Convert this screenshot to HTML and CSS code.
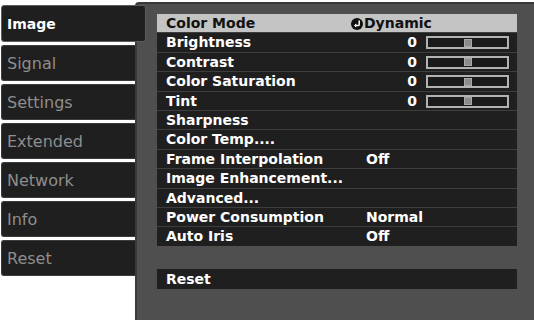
FILE: index.html
```html
<!DOCTYPE html>
<html lang="en">
<head>
    <meta charset="UTF-8">
    <title>Image</title>
    <link rel="stylesheet" href="styles.css">
</head>
<body>
    <div class="screen">
        <nav class="tabs">
            <div class="tab active">Image</div>
            <div class="tab">Signal</div>
            <div class="tab">Settings</div>
            <div class="tab">Extended</div>
            <div class="tab">Network</div>
            <div class="tab">Info</div>
            <div class="tab">Reset</div>
        </nav>

        <main class="panel">
            <div class="list">
                <div class="row selected">
                    <span class="label">Color Mode</span>
                    <span class="value">
                        <svg class="enter-icon" width="12" height="12" viewBox="0 0 12 12">
                            <circle cx="6" cy="6" r="6" fill="#111"/>
                            <path d="M8.2 2.6 V6.4 Q8.2 7.6 7 7.6 H4.4" fill="none" stroke="#fff" stroke-width="1.5"/>
                            <path d="M5.2 5.6 L3 7.6 L5.2 9.6 Z" fill="#fff"/>
                        </svg>Dynamic
                    </span>
                </div>
                <div class="row">
                    <span class="label">Brightness</span>
                    <span class="value"><span class="num">0</span><span class="slider"><span class="knob"></span></span></span>
                </div>
                <div class="row">
                    <span class="label">Contrast</span>
                    <span class="value"><span class="num">0</span><span class="slider"><span class="knob"></span></span></span>
                </div>
                <div class="row">
                    <span class="label">Color Saturation</span>
                    <span class="value"><span class="num">0</span><span class="slider"><span class="knob"></span></span></span>
                </div>
                <div class="row">
                    <span class="label">Tint</span>
                    <span class="value"><span class="num">0</span><span class="slider"><span class="knob"></span></span></span>
                </div>
                <div class="row"><span class="label">Sharpness</span></div>
                <div class="row"><span class="label">Color Temp....</span></div>
                <div class="row">
                    <span class="label">Frame Interpolation</span>
                    <span class="value">Off</span>
                </div>
                <div class="row"><span class="label">Image Enhancement...</span></div>
                <div class="row"><span class="label">Advanced...</span></div>
                <div class="row">
                    <span class="label">Power Consumption</span>
                    <span class="value">Normal</span>
                </div>
                <div class="row">
                    <span class="label">Auto Iris</span>
                    <span class="value">Off</span>
                </div>
            </div>

            <div class="row reset"><span class="label">Reset</span></div>
        </main>
    </div>
</body>
</html>
```

FILE: styles.css
```css
body {
    margin: 0;
    background-color: #fff;
    font-family: "DejaVu Sans", Verdana, sans-serif;
    font-weight: bold;
    font-size: 14px;
}
.screen {
    display: flex;
    height: 320px;
    overflow: hidden;
}
.tabs {
    width: 134px;
    padding: 5px 0 0 1px;
    display: flex;
    flex-direction: column;
    gap: 3px;
}
.tab {
    height: 34px;
    line-height: 35px;
    padding-left: 5px;
    background-color: #1f1f1f;
    border: 1px solid #3c3c3c;
    border-right: none;
    border-radius: 3px 0 0 3px;
    color: #8e8e8e;
    font-weight: normal;
    font-size: 16px;
}
.tab.active {
    position: relative; /* sits over the panel edge */
    z-index: 1;
    height: 35px;
    line-height: 36px;
    margin-right: -11px;
    border: 1px solid #5c5c5c;
    border-radius: 3px;
    color: #fff;
    font-weight: bold;
    font-size: 14px;
}
.panel {
    flex: 1;
    margin-top: 2px;
    padding: 10px 17px 0 20px;
    background-color: #4f4f4f;
    border: 2px solid #3a3a3a;
    border-right: none;
    border-bottom: none;
    border-radius: 4px 0 0 0;
}
.list {
    display: flex;
    flex-direction: column;
    gap: 1px;
    background-color: #3e3e3e;
}
.row {
    display: grid;
    grid-template-columns: 200px 1fr;
    height: 18.4px;
    line-height: 19px;
    padding-left: 9px;
    background-color: #1f1f1f;
    color: #fff;
    white-space: nowrap;
}
.row.selected {
    background-color: #c4c4c4;
    color: #111;
}
.value {
    display: flex;
    align-items: center;
}
.enter-icon {
    margin-left: -15px;
    margin-right: 1px;
}
.num {
    width: 51px;
    text-align: right;
}
.slider {
    width: 79px;
    height: 9px;
    margin-left: 9px;
    border: 2px solid #b2b2b2;
    background-color: #1a1a1a;
    display: flex;
    align-items: center;
    justify-content: center;
}
.knob {
    width: 6px;
    height: 6px;
    background-color: #8c8c8c;
    border: 1px solid #a8a8a8;
}
.row.reset {
    margin-top: 23px;
    height: 20px;
    line-height: 20px;
}
```
